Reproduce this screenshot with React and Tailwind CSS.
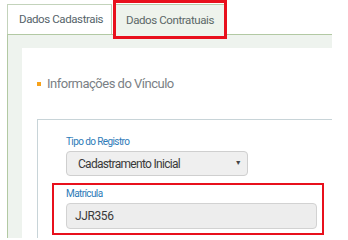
import React from "react";

export default function App() {
    return (
        <div
            className="w-[348px] h-[238px] overflow-hidden bg-white pl-[7px] pt-[4px]"
            style={{ fontFamily: "Roboto, 'Liberation Sans', sans-serif" }}
        >
            <div className="w-[325px]">
                {/* tabs */}
                <div className="relative flex h-[30px]">
                    <div className="flex w-[105px] items-center whitespace-nowrap border-l border-t border-r border-[#c3d3bb] pl-[11px] pt-[1px] text-[11.5px] tracking-[-0.4px] text-[#55636a]">
                        Dados Cadastrais
                    </div>
                    <div className="relative z-10 ml-[3px] flex h-[31px] w-[110px] items-center justify-center whitespace-nowrap border-l border-t border-r border-[#b8cdaa] bg-[#eef3ec] pt-[1px] text-[11.5px] tracking-[-0.4px] text-[#5b6767]">
                        Dados Contratuais
                    </div>
                    <div className="absolute left-[106px] top-[-4px] z-20 h-[39px] w-[114px] border-[3px] border-[#e8101c]"></div>
                </div>

                {/* panel */}
                <div className="h-[204px] border-l border-t border-[#b2c9a3] bg-[#eef3ee] pl-[14px] pt-[13px]">
                    <div className="h-full bg-white pl-[15px] pt-[27px]">
                        <div className="flex h-[18px] items-center">
                            <span className="mr-[6px] block h-[4px] w-[4px] bg-[#f7a21b]"></span>
                            <span className="whitespace-nowrap text-[13px] tracking-[-0.5px] text-[#7a7f85]">Informações do Vínculo</span>
                        </div>
                        <div className="mt-[26px] h-[200px] border-l border-t border-[#c8d4d8] pl-[14px] pt-[15px]">
                            <div className="pl-[14px]">
                                <div className="h-[14px] whitespace-nowrap text-[10px] leading-[14px] tracking-[-0.6px] text-[#2d7bb8]">Tipo do Registro</div>
                                <div className="mt-[2px] flex h-[25px] w-[182px] items-center justify-between rounded-[4px] border border-[#cfcfcf] bg-[#efefef] pl-[11px] pr-[6px] text-[12px] tracking-[-0.7px] text-[#3a3a3a]">
                                    <span className="whitespace-nowrap">Cadastramento Inicial</span>
                                    <span className="text-[7px] text-[#444]">▼</span>
                                </div>
                            </div>
                            <div className="mt-[7px] w-[272px] border-2 border-[#e8101c] pl-[12px] pt-[2px] pb-[4px]">
                                <div className="h-[14px] text-[10px] leading-[14px] tracking-[-0.6px] text-[#2d7bb8]">Matrícula</div>
                                <div className="mt-[2px] flex h-[26px] w-[251px] items-center rounded-[4px] border border-[#d2d2d2] bg-[#ededed] pl-[8px] text-[12px] tracking-[-0.4px] text-[#3a3a3a]">
                                    JJR356
                                </div>
                            </div>
                        </div>
                    </div>
                </div>
            </div>
        </div>
    );
}
